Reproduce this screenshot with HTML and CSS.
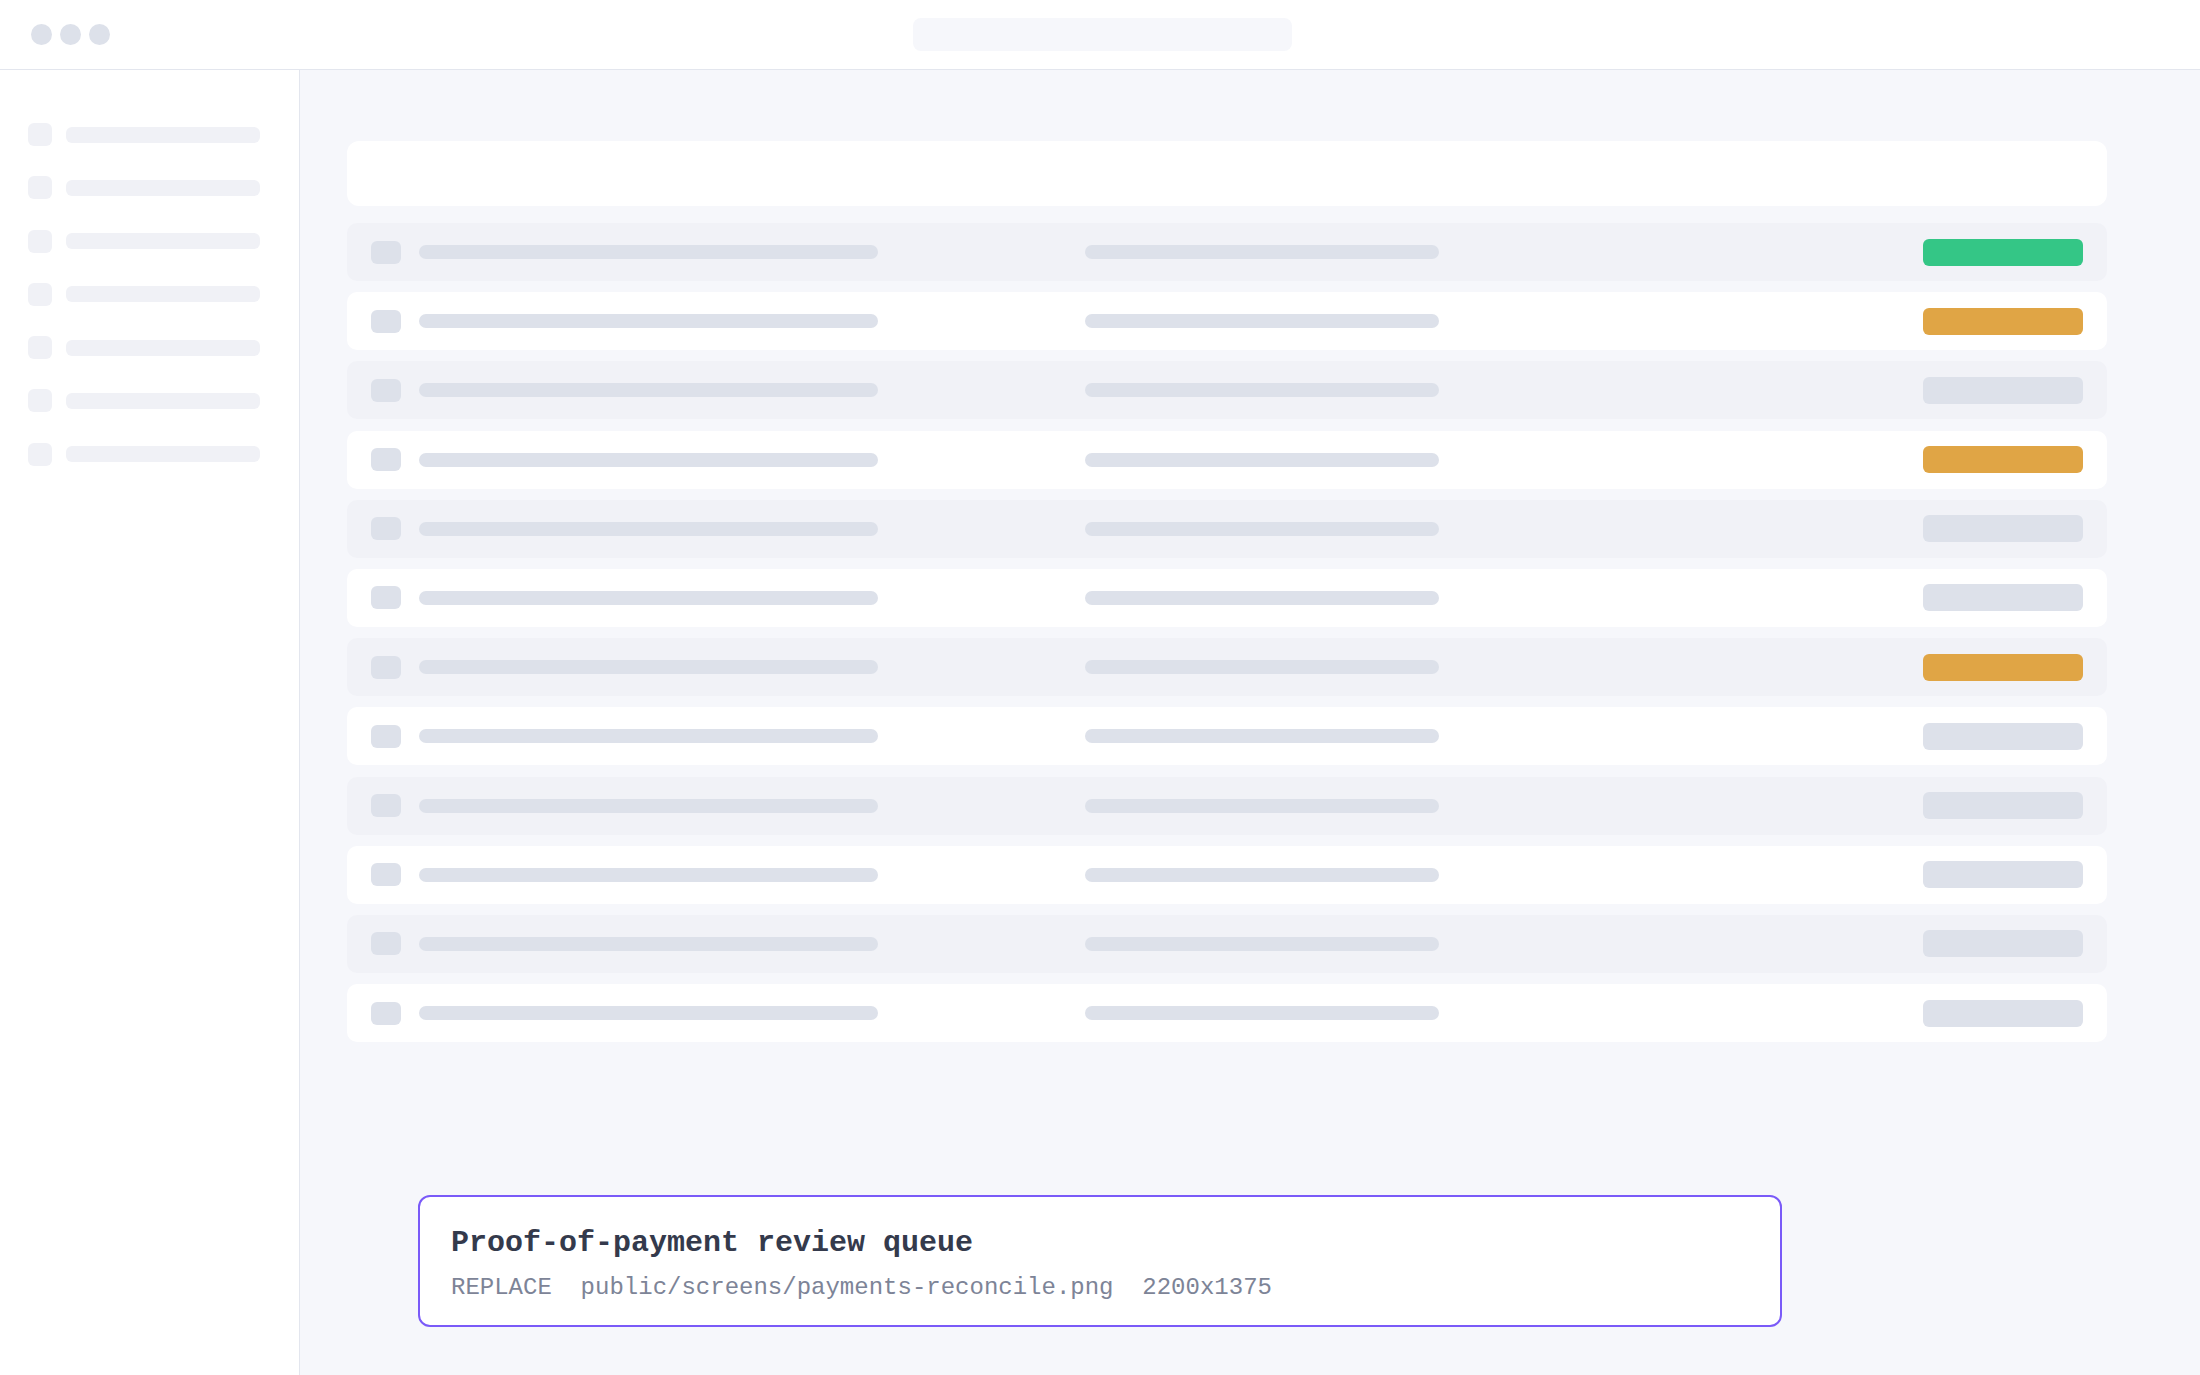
FILE: index.html
```html
<!DOCTYPE html>
<html lang="en">
<head>
  <meta charset="UTF-8" />
  <meta name="viewport" content="width=device-width, initial-scale=1.0"/>
  <title>Payments - Reconcile</title>
  <link rel="stylesheet" href="styles.css">
</head>
<body>

<header class="topbar">
  <div class="dots">
    <span></span><span></span><span></span>
  </div>
  <div class="url-bar"></div>
</header>

<div class="layout">
  <aside class="sidebar">
    <div class="nav-item"><span class="nav-icon"></span><span class="nav-line"></span></div>
    <div class="nav-item"><span class="nav-icon"></span><span class="nav-line"></span></div>
    <div class="nav-item"><span class="nav-icon"></span><span class="nav-line"></span></div>
    <div class="nav-item"><span class="nav-icon"></span><span class="nav-line"></span></div>
    <div class="nav-item"><span class="nav-icon"></span><span class="nav-line"></span></div>
    <div class="nav-item"><span class="nav-icon"></span><span class="nav-line"></span></div>
    <div class="nav-item"><span class="nav-icon"></span><span class="nav-line"></span></div>
  </aside>

  <main class="content">
    <div class="toolbar"></div>

    <div class="queue">
      <div class="row"><span class="check"></span><span class="line line-a"></span><span class="line line-b"></span><span class="pill pill-ok"></span></div>
      <div class="row"><span class="check"></span><span class="line line-a"></span><span class="line line-b"></span><span class="pill pill-warn"></span></div>
      <div class="row"><span class="check"></span><span class="line line-a"></span><span class="line line-b"></span><span class="pill"></span></div>
      <div class="row"><span class="check"></span><span class="line line-a"></span><span class="line line-b"></span><span class="pill pill-warn"></span></div>
      <div class="row"><span class="check"></span><span class="line line-a"></span><span class="line line-b"></span><span class="pill"></span></div>
      <div class="row"><span class="check"></span><span class="line line-a"></span><span class="line line-b"></span><span class="pill"></span></div>
      <div class="row"><span class="check"></span><span class="line line-a"></span><span class="line line-b"></span><span class="pill pill-warn"></span></div>
      <div class="row"><span class="check"></span><span class="line line-a"></span><span class="line line-b"></span><span class="pill"></span></div>
      <div class="row"><span class="check"></span><span class="line line-a"></span><span class="line line-b"></span><span class="pill"></span></div>
      <div class="row"><span class="check"></span><span class="line line-a"></span><span class="line line-b"></span><span class="pill"></span></div>
      <div class="row"><span class="check"></span><span class="line line-a"></span><span class="line line-b"></span><span class="pill"></span></div>
      <div class="row"><span class="check"></span><span class="line line-a"></span><span class="line line-b"></span><span class="pill"></span></div>
    </div>
  </main>
</div>

<!-- placeholder label for the screenshot slot -->
<div class="placeholder">
  <p class="ph-title">Proof-of-payment review queue</p>
  <p class="ph-meta">REPLACE  public/screens/payments-reconcile.png  2200x1375</p>
</div>

</body>
</html>
```

FILE: styles.css
```css
/* Payments reconcile skeleton */
:root {
  --bg-color: #f6f7fb;
  --panel: #ffffff;
  --row-alt: #f1f2f7;
  --border: #e3e6ee;
  --bone: #dde1ea;
  --bone-light: #f0f1f6;
  --ok: #34c686;
  --warn: #e0a545;
  --accent: #7a5af8;
  --text-dark: #343a4c;
  --text-muted: #7d8497;
  --font-mono: 'Liberation Mono', 'DejaVu Sans Mono', monospace;
}

* {
  box-sizing: border-box;
  margin: 0;
  padding: 0;
}

body {
  background: var(--bg-color);
  font-family: 'Inter', sans-serif;
  display: flex;
  flex-direction: column;
  min-height: 100vh;
}

.topbar {
  height: 70px;
  background: var(--panel);
  border-bottom: 1px solid var(--border);
  display: flex;
  align-items: center;
  padding: 0 31px;
}

.dots {
  display: flex;
  gap: 8px;
}

.dots span {
  width: 21px;
  height: 21px;
  border-radius: 50%;
  background: var(--bone);
}

.url-bar {
  width: 379px;
  height: 33px;
  border-radius: 8px;
  background: var(--bg-color);
  margin-left: 803px;
}

.layout {
  flex: 1;
  display: flex;
}

.sidebar {
  width: 300px;
  background: var(--panel);
  border-right: 1px solid var(--border);
  padding: 53px 28px;
  display: flex;
  flex-direction: column;
  gap: 30.3px;
}

.nav-item {
  display: flex;
  align-items: center;
  gap: 14px;
}

.nav-icon {
  width: 24px;
  height: 23px;
  border-radius: 6px;
  background: var(--bone-light);
}

.nav-line {
  width: 194px;
  height: 16px;
  border-radius: 6px;
  background: var(--bone-light);
}

.content {
  flex: 1;
  padding: 71px 93px 60px 47px;
}

.toolbar {
  height: 65px;
  background: var(--panel);
  border-radius: 12px;
  margin-bottom: 17px;
}

.queue {
  display: flex;
  flex-direction: column;
  gap: 11.2px;
}

.row {
  height: 58px;
  border-radius: 10px;
  background: var(--row-alt);
  padding: 0 24px;
  display: grid;
  grid-template-columns: 30px 648px 1fr 160px;
  column-gap: 18px;
  align-items: center;
}

.row:nth-child(even) {
  background: var(--panel);
}

.check {
  width: 30px;
  height: 23px;
  border-radius: 6px;
  background: var(--bone);
}

.line {
  height: 14px;
  border-radius: 7px;
  background: var(--bone);
}

.line-a { width: 459px; }
.line-b { width: 354px; }

.pill {
  width: 160px;
  height: 27px;
  border-radius: 6px;
  background: var(--bone);
}

.pill-ok { background: var(--ok); }
.pill-warn { background: var(--warn); }

.placeholder {
  position: fixed;
  left: 50%;
  bottom: 48px;
  transform: translateX(-50%);
  width: 1364px;
  background: var(--panel);
  border: 2px solid var(--accent);
  border-radius: 12px;
  padding: 28px 31px 22px;
  font-family: var(--font-mono);
}

.ph-title {
  font-size: 30px;
  font-weight: bold;
  color: var(--text-dark);
  line-height: 36px;
}

.ph-meta {
  font-size: 24px;
  color: var(--text-muted);
  line-height: 30px;
  margin-top: 12px;
  white-space: pre;
}
```
